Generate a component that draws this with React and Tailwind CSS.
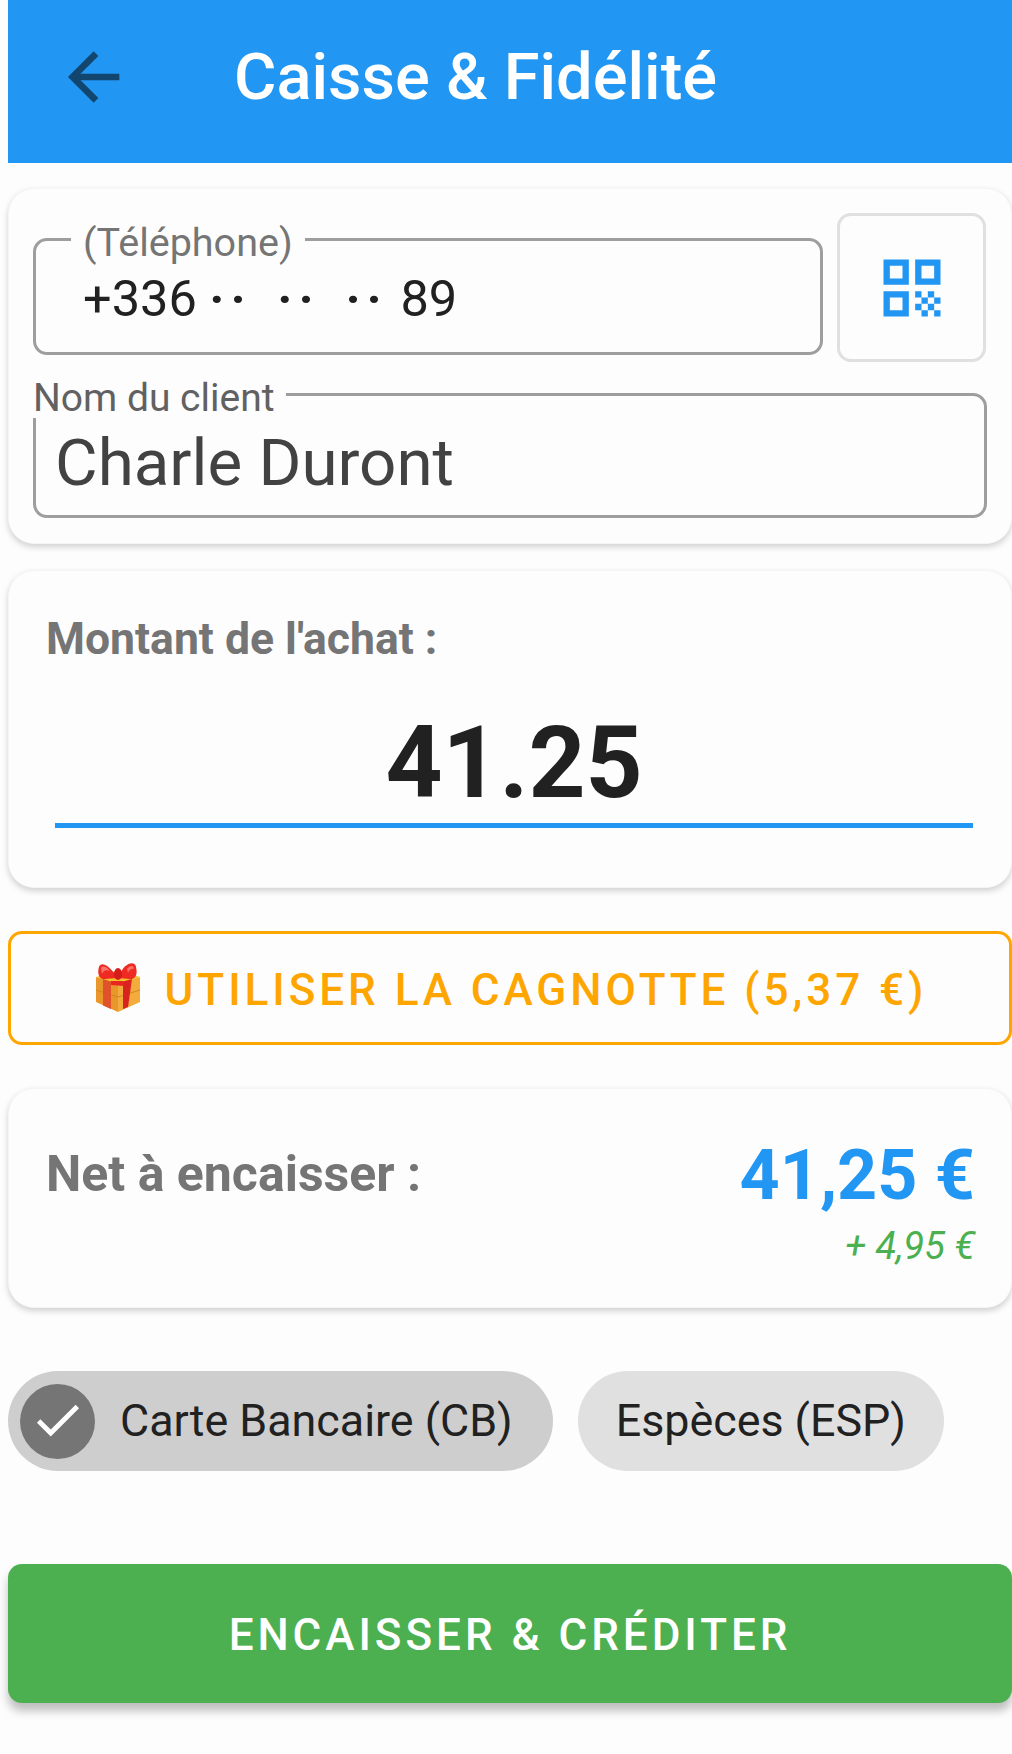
import { ArrowLeft, Check } from 'lucide-react'

function QrIcon() {
  return (
    <svg width="76" height="76" viewBox="0 0 24 24" fill="#2196f3">
      <path d="M3 11h8V3H3v8zm2-6h4v4H5V5zM3 21h8v-8H3v8zm2-6h4v4H5v-4zM13 3v8h8V3h-8zm6 6h-4V5h4v4zM19 19h2v2h-2zM13 13h2v2h-2zM15 15h2v2h-2zM13 17h2v2h-2zM15 19h2v2h-2zM17 17h2v2h-2zM17 13h2v2h-2zM19 15h2v2h-2z" />
    </svg>
  )
}

function GiftIcon() {
  return (
    <svg width="50" height="50" viewBox="0 0 50 50" className="shrink-0">
      <path d="M3 14 L25 20 L25 49 L3 39 Z" fill="#e9972a" />
      <path d="M47 14 L25 20 L25 49 L47 39 Z" fill="#f3ac3c" />
      <path d="M3 14 L25 7 L47 14 L25 21 Z" fill="#f5c22c" />
      <path d="M3 27 L25 34 L47 27" fill="none" stroke="#c97f1f" strokeWidth="0.8" />
      <path d="M10 16 L18 18.5 L18 46 L10 42.5 Z" fill="#e0532a" />
      <path d="M30 18.5 L39 16 L35 44 L30 46 Z" fill="#d9231f" />
      <path d="M18 18 L30 18 L31 23 L18 22 Z" fill="#e8261f" />
      <path d="M24 14 C16 2 8 -2 6 4 C4 10 6 17 12 16 L24 15 Z" fill="#ee2a22" />
      <path d="M26 14 C30 0 42 -3 43 4 C45 12 42 17 36 16 L26 15 Z" fill="#ee2a22" />
      <path d="M8 5 C10 2 14 4 17 8 C13 6 10 8 9 11 Z" fill="#f9736b" />
      <path d="M34 6 C37 2 41 2 41 6 C39 5 36 7 35 10 Z" fill="#f9736b" />
      <ellipse cx="25" cy="11" rx="4" ry="6" fill="#d61d1a" />
    </svg>
  )
}

export default function App() {
  return (
    <div className="h-[1754px] bg-[#fdfdfd] pl-2 font-['Roboto',sans-serif] overflow-hidden">
      {/* App bar */}
      <div className="flex h-[163px] items-center bg-[#2196f3] pb-[9px]">
        <ArrowLeft size={80} strokeWidth={2} strokeLinecap="butt" strokeLinejoin="miter" className="ml-[48px] text-[#12466f]" />
        <h1 className="ml-[98px] text-[65px] font-medium leading-none text-white">Caisse &amp; Fidélité</h1>
      </div>

      {/* Client card */}
      <div className="mt-[25px] flex h-[356px] flex-col rounded-[26px] border border-[#f5f5f5] bg-[#fdfdfd] px-[24px] pt-[24px] shadow-[0_3px_6px_rgba(0,0,0,0.18)]">
        <div className="flex gap-[14px]">
          <div className="relative mt-[25px] h-[117px] w-[790px] rounded-[14px] border-[3px] border-[#9e9e9e]">
            <span className="absolute -top-[18px] left-[35px] bg-[#fdfdfd] px-3 text-[39.5px] leading-[40px] text-[#757575]">(Téléphone)</span>
            <div className="pl-[47px] pt-[30px] text-[50.5px] leading-[56px] text-[#212121] whitespace-nowrap">
              +336 <span className="font-bold tracking-[6px] [word-spacing:7px]">·· ·· ··</span> 89
            </div>
          </div>
          <div className="flex h-[149px] w-[149px] items-center justify-center rounded-[14px] border-[3px] border-[#e0e0e0]">
            <QrIcon />
          </div>
        </div>
        <div className="relative mt-[31px] h-[125px] rounded-[14px] border-[3px] border-[#9e9e9e]">
          <span className="absolute -top-[18px] -left-[3px] bg-[#fdfdfd] pr-3 text-[39px] leading-[40px] text-[#616161]">Nom du client</span>
          <div className="pl-[19px] pt-[32px] text-[65.5px] leading-[70px] text-[#424242]">Charle Duront</div>
        </div>
      </div>

      {/* Amount card */}
      <div className="mt-[26px] h-[318px] rounded-[26px] border border-[#f5f5f5] bg-[#fdfdfd] pl-[37px] pr-[38px] shadow-[0_3px_6px_rgba(0,0,0,0.18)]">
        <div className="pt-[42px] text-[44.5px] font-bold leading-[52px] text-[#757575]">Montant de l'achat :</div>
        <div className="ml-[9px] mt-[46px] border-b-[5px] border-[#2196f3] pb-[8px] text-center text-[99.5px] font-bold leading-[104px] text-[#212121]">41.25</div>
      </div>

      {/* Loyalty button */}
      <div className="mt-[43px] flex h-[114px] items-center justify-center gap-[22px] rounded-[14px] border-[3px] border-[#ffa500] text-[44px] font-medium tracking-[0.09em] text-[#ffa500]">
        <GiftIcon />
        <span className="pt-[4px]">UTILISER LA CAGNOTTE (5,37 €)</span>
      </div>

      {/* Net card */}
      <div className="mt-[43px] flex h-[220px] justify-between rounded-[26px] border border-[#f5f5f5] bg-[#fdfdfd] pl-[37px] pr-[36px] pt-[50px] shadow-[0_3px_6px_rgba(0,0,0,0.18)]">
        <div className="pt-[7px] text-[50px] font-bold leading-[56px] text-[#757575]">Net à encaisser :</div>
        <div className="flex flex-col items-end">
          <div className="text-[70px] font-bold leading-[72px] text-[#2196f3]">41,25 €</div>
          <div className="mt-[13px] text-[38px] italic leading-[44px] text-[#4caf50]">+ 4,95 €</div>
        </div>
      </div>

      {/* Payment chips */}
      <div className="mt-[63px] flex gap-[25px]">
        <div className="flex h-[100px] items-center rounded-full bg-[#cecece] pl-[12px] pr-[40px]">
          <div className="flex h-[75px] w-[75px] items-center justify-center rounded-full bg-[#757575]">
            <Check size={58} strokeWidth={2} strokeLinecap="butt" strokeLinejoin="miter" className="text-white" />
          </div>
          <span className="ml-[25px] text-[44.8px] text-[#212121]">Carte Bancaire (CB)</span>
        </div>
        <div className="flex h-[100px] items-center rounded-full bg-[#e0e0e0] px-[38px]">
          <span className="text-[44.8px] text-[#212121]">Espèces (ESP)</span>
        </div>
      </div>

      {/* Submit */}
      <div className="mt-[93px] flex h-[139px] items-center justify-center rounded-[14px] bg-[#4caf50] pt-[3px] text-[44px] font-medium tracking-[0.09em] text-white shadow-[0_8px_10px_rgba(0,0,0,0.25)]">
        ENCAISSER &amp; CRÉDITER
      </div>
    </div>
  )
}
